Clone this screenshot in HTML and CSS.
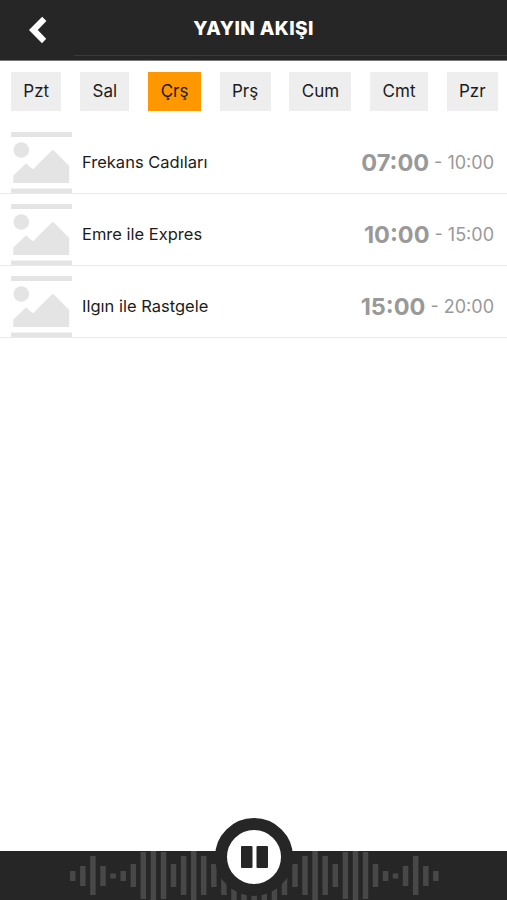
FILE: index.html
```html
<!DOCTYPE html>
<html lang="tr">
<head>
    <meta charset="UTF-8">
    <meta name="viewport" content="width=device-width, initial-scale=1.0">
    <title>Yayın Akışı</title>
    <link rel="stylesheet" href="styles.css">
</head>
<body>

    <!-- Header Section -->
    <header>
        <a href="#" class="back-btn" aria-label="Geri">
            <svg width="20" height="28" viewBox="0 0 20 28"><path d="M1 14 14.2 .8 18.4 5 9.8 13.9 18.2 22.8 14 27.2Z" fill="#fff"/></svg>
        </a>
        <h1>YAYIN AKIŞI</h1>
        <div class="header-line"></div>
    </header>

    <!-- Day Tabs -->
    <nav class="days">
        <a href="#" class="day">Pzt</a>
        <a href="#" class="day">Sal</a>
        <a href="#" class="day active">Çrş</a>
        <a href="#" class="day">Prş</a>
        <a href="#" class="day">Cum</a>
        <a href="#" class="day">Cmt</a>
        <a href="#" class="day">Pzr</a>
    </nav>

    <!-- Placeholder picture used by every program -->
    <svg class="symbols">
        <symbol id="placeholder" viewBox="0 0 61 61">
            <path d="M0 0H61V5H0ZM0 56.5H61V61H0Z"/>
            <circle cx="10.3" cy="18" r="7.8"/>
            <path d="M2.3 51V43.5L15 31.3 22 37.5 41.7 17.5 58.2 34V51Z"/>
        </symbol>
    </svg>

    <!-- Program List -->
    <main class="programs">
        <div class="program">
            <svg class="thumb"><use href="#placeholder"/></svg>
            <div class="name">Frekans Cadıları</div>
            <div class="time"><b class="start">07:00</b><span class="end">- 10:00</span></div>
        </div>
        <div class="program">
            <svg class="thumb"><use href="#placeholder"/></svg>
            <div class="name">Emre ile Expres</div>
            <div class="time"><b class="start">10:00</b><span class="end">- 15:00</span></div>
        </div>
        <div class="program">
            <svg class="thumb"><use href="#placeholder"/></svg>
            <div class="name">Ilgın ile Rastgele</div>
            <div class="time"><b class="start">15:00</b><span class="end">- 20:00</span></div>
        </div>
    </main>

    <!-- Player Section -->
    <footer>
        <svg class="wave" width="507" height="49" viewBox="0 0 507 49">
            <path d="M72.7 20v10M82.8 15v20M92.9 5v39M103 15v20M123.2 20v10M133.3 13v23M173.5 13v23M183.6 5v39M203.7 5v39M213.8 13v23M295 13v23M305 5v39M325.2 5v39M335.3 13v23M375.5 13v23M385.6 20v10M405.6 15v20M415.7 5v39M425.8 15v20M435.8 20v10"/>
            <path d="M143.3 1v47M153.4 0v49M163.5 1v47M193.7 0v49M223.9 5v39M234 0v49M244 0v49M254.2 0v49M264.3 0v49M274.4 0v49M284.5 5v39M315.1 0v49M345.4 1v47M355.5 0v49M365.5 1v47"/>
            <path d="M113.1 22.5v5M395.5 22.5v5"/>
        </svg>
        <button class="pause-btn" aria-label="Duraklat">
            <svg width="27" height="22" viewBox="0 0 27 22"><rect width="11.5" height="22" rx="1"/><rect x="15.5" width="11.5" height="22" rx="1"/></svg>
        </button>
    </footer>

</body>
</html>
```
FILE: styles.css
```css
* {
    box-sizing: border-box;
}
body {
    font-family: Inter, Roboto, sans-serif;
    background-color: #fff;
    color: #1c1c1c;
    margin: 0;
    height: 100vh;
    display: flex;
    flex-direction: column;
    overflow: hidden;
}
a {
    color: inherit;
    text-decoration: none;
}
header {
    position: relative;
    height: 61px;
    background-color: #262626;
    border-bottom: 1px solid #777;
    color: white;
}
header h1 {
    margin: 0;
    text-align: center;
    font-size: 19px;
    font-weight: 800;
    line-height: 58px;
    letter-spacing: 0.4px;
}
.back-btn {
    position: absolute;
    left: 28px;
    top: 16px;
}
.header-line {
    position: absolute;
    left: 74px;
    right: 0;
    top: 55px;
    height: 1px;
    background-color: #3a3a3a;
}
.days {
    display: flex;
    justify-content: space-between;
    padding: 11px 9px 0 11px;
}
.day {
    padding: 0 12.3px;
    background-color: #eee;
    font-size: 17px;
    line-height: 38.5px;
}
.day.active {
    background-color: #ff9800;
}
.symbols {
    display: none;
}
.programs {
    flex: 1;
    padding-top: 11.5px;
}
.program {
    display: flex;
    align-items: center;
    height: 72px;
    padding: 10px 13px 0 11px;
    border-bottom: 1px solid #e9e9e9;
}
.thumb {
    width: 61px;
    height: 61px;
    fill: #e4e4e4;
}
.name {
    flex: 1;
    margin: 0 0 2px 10px;
    font-size: 16.5px;
}
.time {
    color: #999;
    display: flex;
    align-items: center;
    margin-bottom: 1px;
}
.start {
    font-size: 23.5px;
    font-weight: 700;
    margin-right: 5px;
}
.end {
    font-size: 18px;
}
footer {
    position: relative;
    height: 49px;
    background-color: #262626;
}
.wave {
    display: block;
    fill: none;
    stroke: #484848;
    stroke-width: 5.5;
}
.pause-btn {
    position: absolute;
    left: 215px;
    top: -33px;
    width: 78px;
    height: 78px;
    padding: 0;
    border: 12.5px solid #262626;
    border-radius: 50%;
    background-color: #fff;
    display: flex;
    align-items: center;
    justify-content: center;
}
.pause-btn svg {
    fill: #262626;
}
```
